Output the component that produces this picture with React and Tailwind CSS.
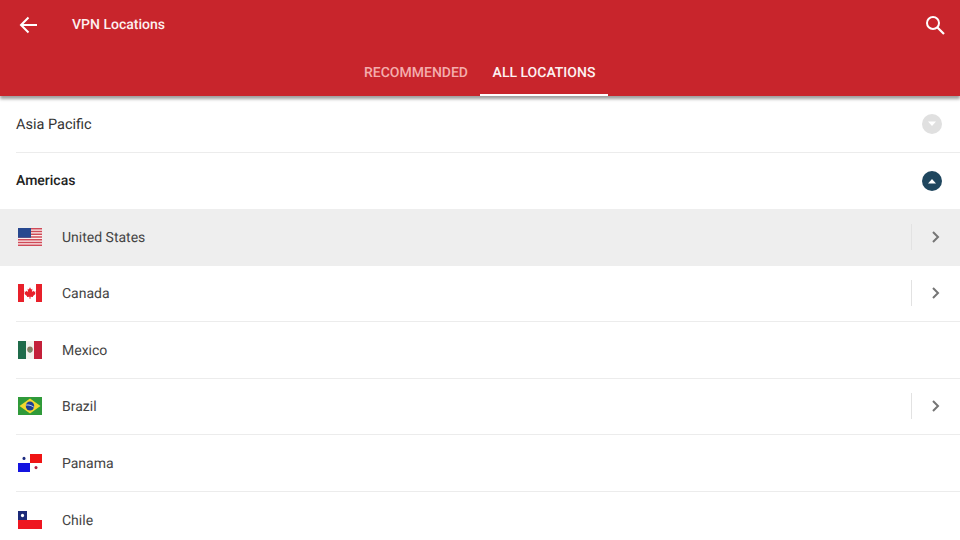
import React from "react";

const flagProps = { width: 24, height: 18, viewBox: "0 0 24 17", preserveAspectRatio: "none" };

const Us = () => (
  <svg {...flagProps}>
    <rect width="24" height="17" fill="#fbeeee" />
    {[0, 2.6, 5.2, 7.8, 10.4, 13, 15.6].map((y) => (
      <rect key={y} y={y} width="24" height="1.4" fill="#cf4a58" />
    ))}
    <rect width="13" height="9.2" fill="#27488f" />
  </svg>
);
const Ca = () => (
  <svg {...flagProps}>
    <rect width="24" height="17" fill="#fff" />
    <rect width="6" height="17" fill="#e8202a" />
    <rect x="18" width="6" height="17" fill="#e8202a" />
    <path d="M12 3l1.2 2.2 1.2-.6-.5 3 1.6-1.3.5 1 1.6-.3-.6 1.8.7.5-2.6 2-.2 1-2.4-.3v2h-1v-2l-2.4.3-.2-1-2.6-2 .7-.5-.6-1.8 1.6.3.5-1 1.6 1.3-.5-3 1.2.6z" fill="#e8202a" />
  </svg>
);
const Mx = () => (
  <svg {...flagProps}>
    <rect width="24" height="17" fill="#f4f2ee" />
    <rect width="8" height="17" fill="#1f6b4a" />
    <rect x="16" width="8" height="17" fill="#c4203a" />
    <circle cx="12" cy="8" r="2.8" fill="#8a7a60" />
    <circle cx="12" cy="9.5" r="1.6" fill="#6f8f70" />
  </svg>
);
const Br = () => (
  <svg {...flagProps}>
    <rect width="24" height="17" fill="#2f9a3a" />
    <path d="M12 1.4L22.5 8.5 12 15.6 1.5 8.5z" fill="#f2d82e" />
    <circle cx="12" cy="8.5" r="4.2" fill="#1f3f94" />
    <path d="M8 7.6c2.6-.4 5.6.4 7.8 2" stroke="#e8eef0" strokeWidth="0.8" fill="none" />
  </svg>
);
const Pa = () => (
  <svg {...flagProps}>
    <rect width="24" height="17" fill="#fff" />
    <rect x="12" width="12" height="8.5" fill="#f01414" />
    <rect y="8.5" width="12" height="8.5" fill="#1414e0" />
    <circle cx="6" cy="4.2" r="1.5" fill="#1c2a80" />
    <circle cx="18" cy="12.8" r="1.5" fill="#b02040" />
  </svg>
);
const Cl = () => (
  <svg {...flagProps}>
    <rect width="24" height="8.5" fill="#fff" />
    <rect y="8.5" width="24" height="8.5" fill="#ee1620" />
    <rect width="9" height="8.5" fill="#1c2a78" />
    <circle cx="4.5" cy="4.2" r="1.6" fill="#fff" />
  </svg>
);

const Chevron = () => (
  <div className="flex h-[26px] w-[49px] items-center border-l border-[#e2e2e2] pl-[19px]">
    <svg width="10" height="14" viewBox="0 0 10 14" fill="none">
      <path d="M2 2l5 5-5 5" stroke="#757575" strokeWidth="2" />
    </svg>
  </div>
);

const countries = [
  { name: "United States", Flag: Us, more: true, active: true },
  { name: "Canada", Flag: Ca, more: true },
  { name: "Mexico", Flag: Mx },
  { name: "Brazil", Flag: Br, more: true },
  { name: "Panama", Flag: Pa },
  { name: "Chile", Flag: Cl, last: true },
];

export default function App() {
  return (
    <div className="flex h-[540px] w-[960px] flex-col overflow-hidden bg-white font-['Roboto',sans-serif] [text-rendering:geometricPrecision]">
      <header className="relative z-10 flex h-[96px] shrink-0 flex-col bg-[#c8252c] shadow-[0_3px_3px_rgba(0,0,0,0.38)]">
        <div className="flex h-[50px] items-center pl-[19px] pr-[14px]">
          <svg width="19" height="20" viewBox="0 0 19 20" fill="none">
            <path d="M18 10H2.5M9.5 2.5L2 10l7.5 7.5" stroke="#fff" strokeWidth="2" />
          </svg>
          <span className="ml-[34px] pt-[1px] text-[14px] font-medium text-[#fdf0f0]">VPN Locations</span>
          <svg className="ml-auto" width="22" height="22" viewBox="0 0 22 22" fill="none">
            <circle cx="9" cy="9" r="6" stroke="#fff" strokeWidth="2" />
            <path d="M13.5 13.5L20 20" stroke="#fff" strokeWidth="2.2" />
          </svg>
        </div>
        <div className="flex h-[46px] justify-center">
          <div className="flex w-[128px] items-center justify-center text-[14px] font-medium text-[#f4adad]">RECOMMENDED</div>
          <div className="flex w-[128px] items-center justify-center border-b-2 border-white pt-[2px] text-[14px] font-medium text-[#fdf2f2]">ALL LOCATIONS</div>
        </div>
      </header>

      <div className="flex h-[56px] shrink-0 items-center justify-between pl-[16px] pr-[18px]">
        <span className="pt-[2px] text-[14.5px] text-[#333]">Asia Pacific</span>
        <span className="flex h-5 w-5 items-center justify-center rounded-full bg-[#e0e0e0]">
          <svg width="10" height="6" viewBox="0 0 10 6"><path d="M1 0.5h8L5 5z" fill="#fff" /></svg>
        </span>
      </div>
      <div className="ml-[16px] h-px shrink-0 bg-[#ececec]" />
      <div className="flex h-[56px] shrink-0 items-center justify-between pl-[16px] pr-[18px]">
        <span className="pt-[1px] text-[14px] font-medium text-[#222]">Americas</span>
        <span className="flex h-5 w-5 items-center justify-center rounded-full bg-[#1f465e]">
          <svg width="10" height="6" viewBox="0 0 10 6"><path d="M1 5.5h8L5 1z" fill="#fff" /></svg>
        </span>
      </div>

      {countries.map(({ name, Flag, more, active, last }) => (
        <div key={name} className={`flex h-[56.5px] shrink-0 flex-col ${active ? "bg-[#eeeeee]" : ""}`}>
          <div className="flex flex-1 items-center pl-[18px]">
            <Flag />
            <span className="ml-[20px] pt-[3px] text-[14px] text-[#444]">{name}</span>
            {more && <div className="ml-auto"><Chevron /></div>}
          </div>
          {!last && !active && <div className="ml-[16px] h-px bg-[#ececec]" />}
        </div>
      ))}
    </div>
  );
}
